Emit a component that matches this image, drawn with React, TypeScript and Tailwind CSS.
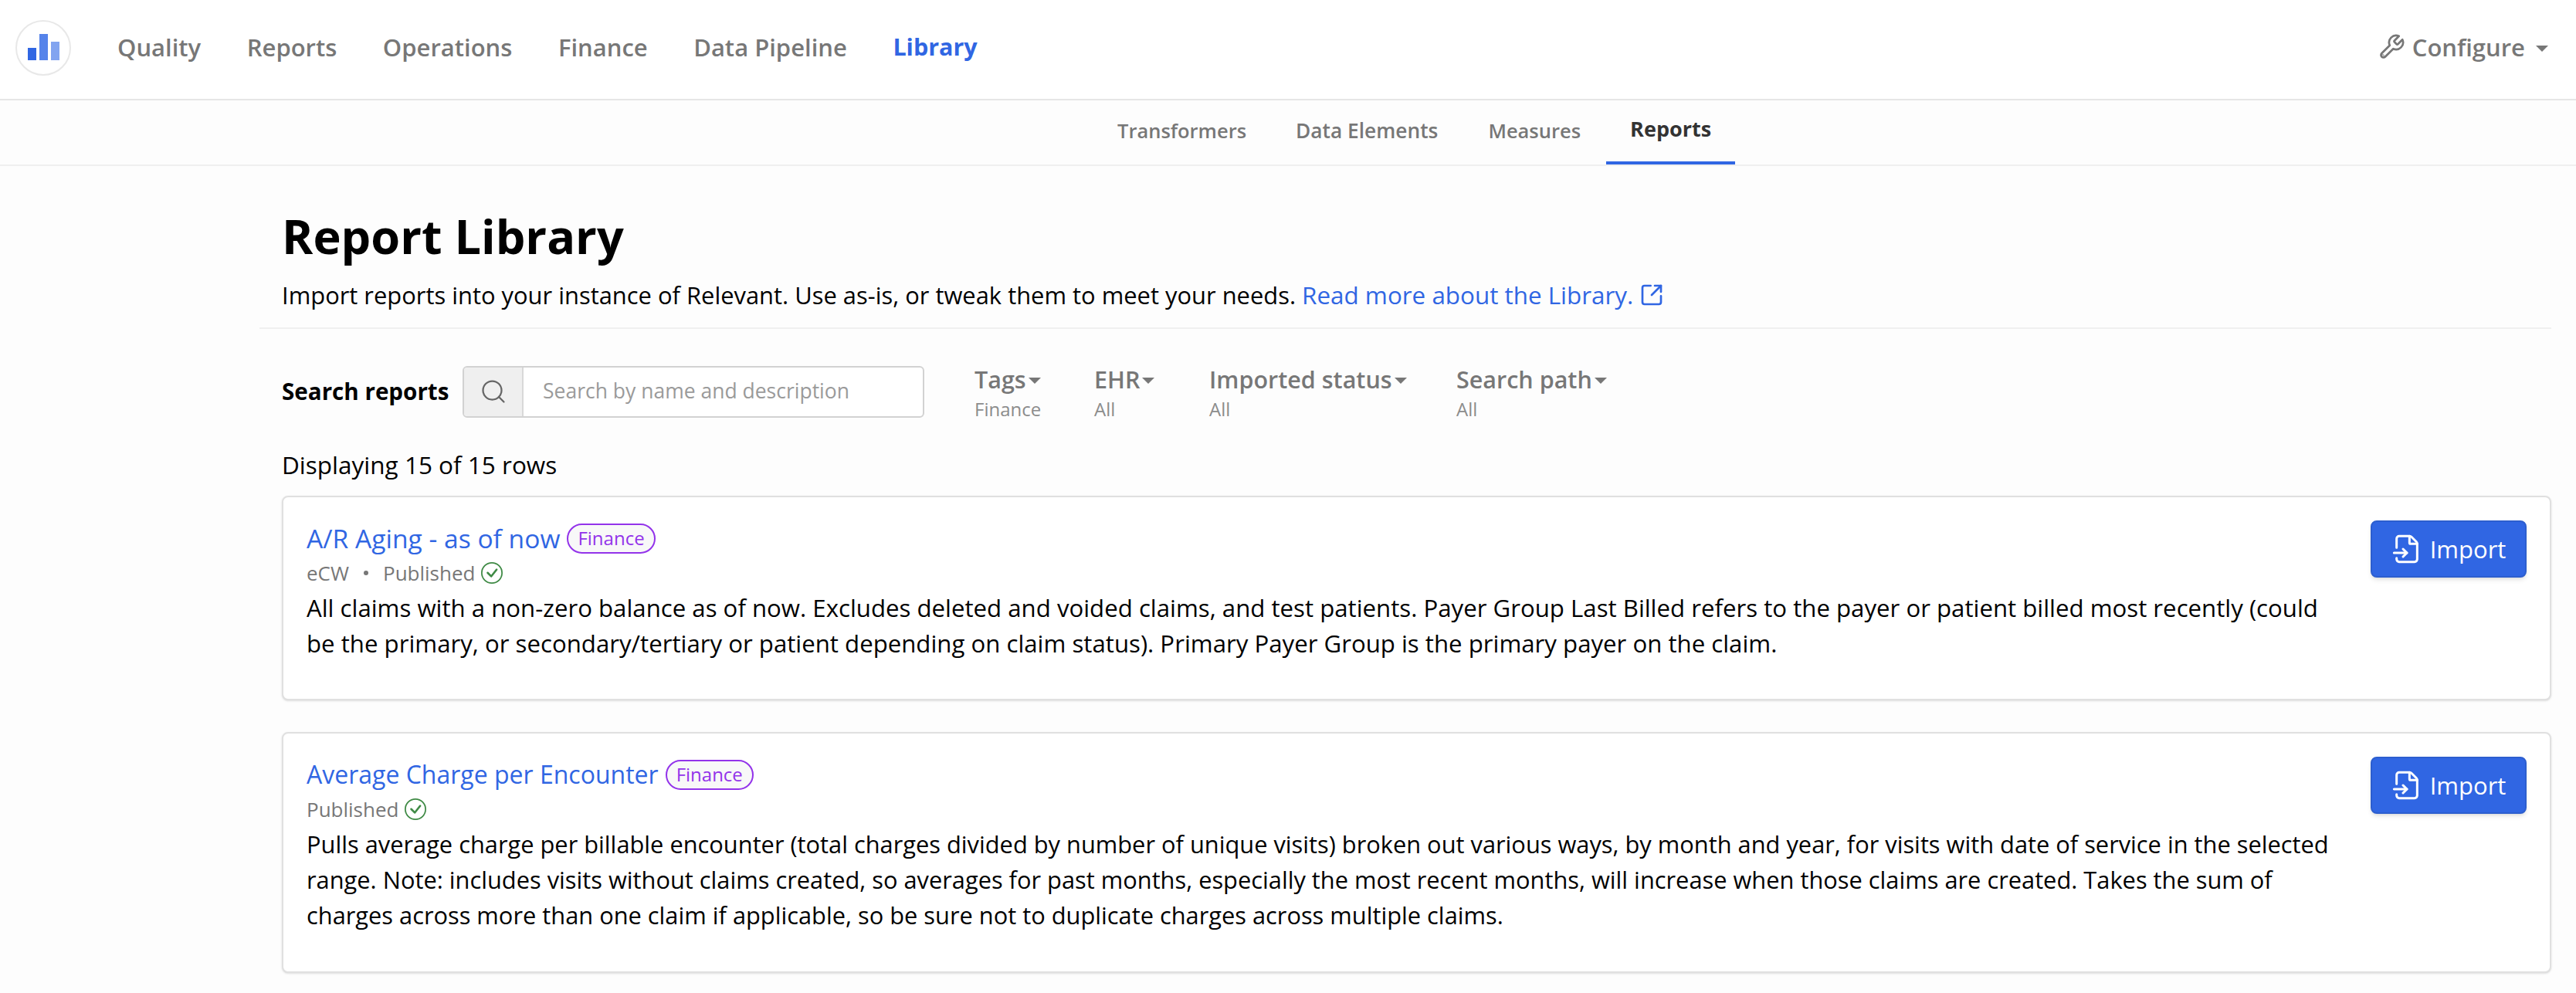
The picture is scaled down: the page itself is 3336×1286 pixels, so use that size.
import { FileInput, Search, SquareArrowOutUpRight } from "lucide-react";
import { BsCheckCircle } from "react-icons/bs";

const navItems = ["Quality", "Reports", "Operations", "Finance", "Data Pipeline", "Library"];
const subItems = [
  { name: "Transformers", cls: "px-[32px] text-[25.5px] font-semibold text-[#777777]" },
  { name: "Data Elements", cls: "px-[32px] text-[26.3px] font-semibold text-[#777777]" },
  { name: "Measures", cls: "pl-[33px] pr-[32px] text-[25.5px] font-semibold text-[#777777]" },
  { name: "Reports", cls: "ml-[1px] border-b-4 border-[#3066e3] px-[31px] text-[27px] font-bold text-[#333333]" },
];
const filters = [
  { name: "Tags", value: "Finance", cls: "w-[155px]" },
  { name: "EHR", value: "All", cls: "w-[149px]" },
  { name: "Imported status", value: "All", cls: "w-[320px]" },
  { name: "Search path", value: "All", cls: "w-[200px]" },
];
const reports = [
  {
    title: "A/R Aging - as of now",
    titleCls: "text-[33.6px]",
    descCls: "text-[31.2px]",
    ehr: "eCW",
    cardHeight: "h-[265px]",
    desc: "All claims with a non-zero balance as of now. Excludes deleted and voided claims, and test patients. Payer Group Last Billed refers to the payer or patient billed most recently (could be the primary, or secondary/tertiary or patient depending on claim status). Primary Payer Group is the primary payer on the claim.",
  },
  {
    title: "Average Charge per Encounter",
    titleCls: "text-[32px]",
    descCls: "text-[30.8px]",
    ehr: "",
    cardHeight: "h-[312px]",
    desc: "Pulls average charge per billable encounter (total charges divided by number of unique visits) broken out various ways, by month and year, for visits with date of service in the selected range. Note: includes visits without claims created, so averages for past months, especially the most recent months, will increase when those claims are created. Takes the sum of charges across more than one claim if applicable, so be sure not to duplicate charges across multiple claims.",
  },
];

const Caret = ({ cls }: { cls: string }) => (
  <span className={`inline-block border-x-[8px] border-t-[8px] border-x-transparent ${cls}`} />
);

const WrenchIcon = () => (
  <svg viewBox="0 0 24 24" fill="none" stroke="currentColor" strokeWidth="1.8" strokeLinecap="round" strokeLinejoin="round" className="mr-[9px] h-[36px] w-[36px]">
    <path d="M14.7 6.3a1 1 0 0 0 0 1.4l1.6 1.6a1 1 0 0 0 1.4 0l3.77-3.77a6 6 0 0 1-7.94 7.94l-6.91 6.91a2.12 2.12 0 0 1-3-3l6.91-6.91a6 6 0 0 1 7.94-7.94l-3.76 3.76z" />
    <circle cx="4.6" cy="19.4" r="0.3" />
  </svg>
);

export default function App() {
  return (
    <div className="h-[1286px] overflow-hidden bg-[#fdfdfd] font-['Open_Sans',sans-serif] text-[32px] text-black">
      <header className="flex h-[130px] items-center border-b-2 border-[#e6e6e6] bg-white pb-[4px] pl-[20px] pr-[36px]">
        <div className="mr-[60px] flex h-[72px] w-[72px] items-end justify-center gap-[4px] rounded-full border-2 border-[#e8e8e8] pb-[18px]">
          <span className="h-[16px] w-[11px] bg-[#3066e3]" />
          <span className="h-[34px] w-[11px] bg-[#5583ea]" />
          <span className="h-[24px] w-[11px] bg-[#82a4f0]" />
        </div>
        <nav className="mb-[2px] flex gap-[59.5px] text-[31px] font-semibold text-[#777777]">
          {navItems.map((item) => (
            <span key={item} className={item === "Library" ? "text-[30.5px] font-bold text-[#3066e3]" : ""}>
              {item}
            </span>
          ))}
        </nav>
        <div className="mb-[2px] ml-auto flex items-center text-[31px] font-semibold text-[#777777]">
          <WrenchIcon />
          Configure
          <Caret cls="ml-[14px] mt-[4px] border-t-[#777777]" />
        </div>
      </header>

      <div className="flex h-[85px] border-b-2 border-[#efefef] pl-[1415px]">
        {subItems.map((item) => (
          <span key={item.name} className={`flex items-center pb-[4px] ${item.cls}`}>
            {item.name}
          </span>
        ))}
      </div>

      <main className="ml-[336px] pr-[32px]">
        <section className="h-[211px] border-b-2 border-[#f0f0f0] pl-[29px] pt-[53px]">
          <h1 className="text-[61.2px] leading-[76px] font-bold">Report Library</h1>
          <p className="mt-[16px] flex items-center text-[30.9px] leading-[44px]">
            <span>Import reports into your instance of Relevant. Use as-is, or tweak them to meet your needs.</span>
            <span className="ml-[8px] text-[31.4px] text-[#3066e3]">Read more about the Library.</span>
            <SquareArrowOutUpRight className="ml-[8px] h-[32px] w-[32px] text-[#3066e3]" strokeWidth={2} />
          </p>
        </section>

        <div className="flex h-[140px] items-center pl-[29px] pt-[22px]">
          <span className="w-[234px] text-[29.6px] font-bold">Search reports</span>
          <div className="flex h-[67px] w-[598px] overflow-hidden rounded-[6px] border-2 border-[#d2d2d2] bg-white">
            <div className="flex w-[77px] items-center justify-center border-r-2 border-[#d8d8d8] bg-[#efefef]">
              <Search className="h-[36px] w-[36px] text-[#666666]" strokeWidth={1.5} />
            </div>
            <span className="flex items-center pl-[25px] text-[26.5px] text-[#9a9a9a]">Search by name and description</span>
          </div>
          <div className="ml-[65px] mt-[4px] flex">
            {filters.map((f) => (
              <div key={f.name} className={f.cls}>
                <div className="flex items-center text-[30.5px] leading-[40px] font-semibold text-[#777777]">
                  {f.name}
                  <Caret cls="ml-[3px] mt-[4px] border-t-[#777777]" />
                </div>
                <div className="mt-[2px] text-[24px] leading-[34px] text-[#8c8c8c]">{f.value}</div>
              </div>
            ))}
          </div>
        </div>

        <p className="pl-[29px] pt-[13px] text-[31.5px] leading-[46px]">Displaying 15 of 15 rows</p>

        <div className="ml-[29px] mt-[17px] flex flex-col gap-[41px]">
          {reports.map((r) => (
            <article
              key={r.title}
              className={`flex rounded-[8px] border-2 border-[#e0e0e0] bg-white pl-[30px] pr-[30px] pt-[30px] shadow-sm ${r.cardHeight}`}
            >
              <div className="w-[2644px]">
                <div className="flex items-center gap-[9px] leading-[46px]">
                  <span className={`font-medium text-[#3066e3] ${r.titleCls}`}>{r.title}</span>
                  <span className="flex h-[39px] items-center rounded-full border-2 border-[#9333ea] bg-[#f8f8f8] px-[12px] text-[24px] text-[#9333ea]">
                    Finance
                  </span>
                </div>
                <div className="flex h-[44px] items-center text-[26px] text-[#777777]">
                  {r.ehr && (
                    <>
                      <span>{r.ehr}</span>
                      <span className="mx-[19px] h-[6px] w-[6px] rounded-full bg-[#777777]" />
                    </>
                  )}
                  <span>Published</span>
                  <BsCheckCircle className="ml-[8px] h-[28px] w-[28px] text-[#3f8a45]" />
                </div>
                <p className={`leading-[46px] ${r.descCls}`}>{r.desc}</p>
              </div>
              <button className="ml-[30px] flex h-[74px] w-[202px] items-center justify-center gap-[10px] rounded-[8px] border-2 border-[#2c5ecf] bg-[#3066e3] text-[31px] font-medium text-white shadow-md">
                <FileInput className="h-[40px] w-[40px]" strokeWidth={1.8} />
                Import
              </button>
            </article>
          ))}
        </div>
      </main>
    </div>
  );
}
